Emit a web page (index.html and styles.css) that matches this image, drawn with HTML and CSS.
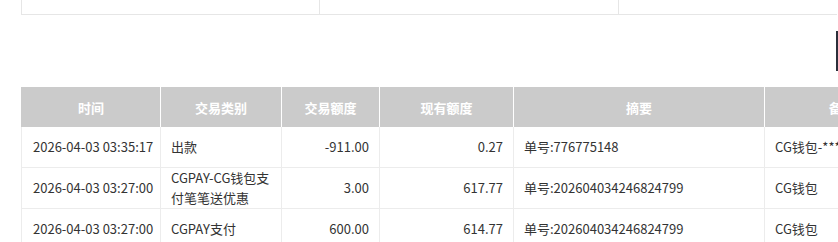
FILE: index.html
```html
<!DOCTYPE html>
<html lang="zh">
<head>
<meta charset="utf-8">
<link rel="stylesheet" href="styles.css">
</head>
<body>
<div class="page">
  <div class="summary">
    <div class="summary-cell c1"></div>
    <div class="summary-cell c2"></div>
    <div class="summary-cell c3"></div>
  </div>
  <table class="records">
    <colgroup>
      <col class="w-time"><col class="w-type"><col class="w-amt"><col class="w-bal"><col class="w-sum"><col class="w-note">
    </colgroup>
    <thead>
      <tr><th>时间</th><th>交易类别</th><th>交易额度</th><th>现有额度</th><th>摘要</th><th>备注</th></tr>
    </thead>
    <tbody>
      <tr><td>2026-04-03 03:35:17</td><td>出款</td><td class="num">-911.00</td><td class="num">0.27</td><td>单号:776775148</td><td>CG钱包-****</td></tr>
      <tr><td>2026-04-03 03:27:00</td><td>CGPAY-CG钱包支付笔笔送优惠</td><td class="num">3.00</td><td class="num">617.77</td><td>单号:202604034246824799</td><td>CG钱包</td></tr>
      <tr><td>2026-04-03 03:27:00</td><td>CGPAY支付</td><td class="num">600.00</td><td class="num">614.77</td><td>单号:202604034246824799</td><td>CG钱包</td></tr>
    </tbody>
  </table>
</div>
<div class="side-tab"></div>
</body>
</html>
```
FILE: styles.css
```css
html, body {
  margin: 0;
  padding: 0;
  overflow: hidden;
  background: #fff;
}
body {
  font-family: "Noto Sans CJK SC", "Noto Sans", sans-serif;
  font-size: 13px;
  color: #333;
}
.page {
  padding-left: 21px;
}
.summary {
  display: flex;
  width: 816px;
  height: 14px;
  border-bottom: 1px solid #e6e6e6;
}
.summary-cell {
  border-left: 1px solid #e6e6e6;
  box-sizing: border-box;
}
.c1 { width: 298px; }
.c2 { width: 299px; }
.c3 { flex: 1; }
.records {
  margin-top: 72px;
  border-collapse: collapse;
  table-layout: fixed;
  width: 897px;
}
.w-time { width: 139px; }
.w-type { width: 121px; }
.w-amt { width: 98px; }
.w-bal { width: 134px; }
.w-sum { width: 251px; }
.w-note { width: 154px; }
.records th {
  background: #cbcbcb;
  color: #fff;
  font-weight: bold;
  height: 40px;
  padding: 0;
  text-align: center;
  border-left: 1px solid #fff;
}
.records th:first-child {
  border-left: 1px solid #cbcbcb;
}
.records td {
  height: 40px;
  line-height: 20px;
  padding: 0 10px;
  border: 1px solid #ececec;
  border-top: none;
  vertical-align: middle;
  word-break: break-all;
  white-space: normal;
}
.records td:first-child {
  padding-left: 11px;
  white-space: nowrap;
}
.records td.num {
  text-align: right;
}
.side-tab {
  position: fixed;
  left: 836px;
  top: 31px;
  width: 2px;
  height: 40px;
  background: #2b2f3a;
}
```
